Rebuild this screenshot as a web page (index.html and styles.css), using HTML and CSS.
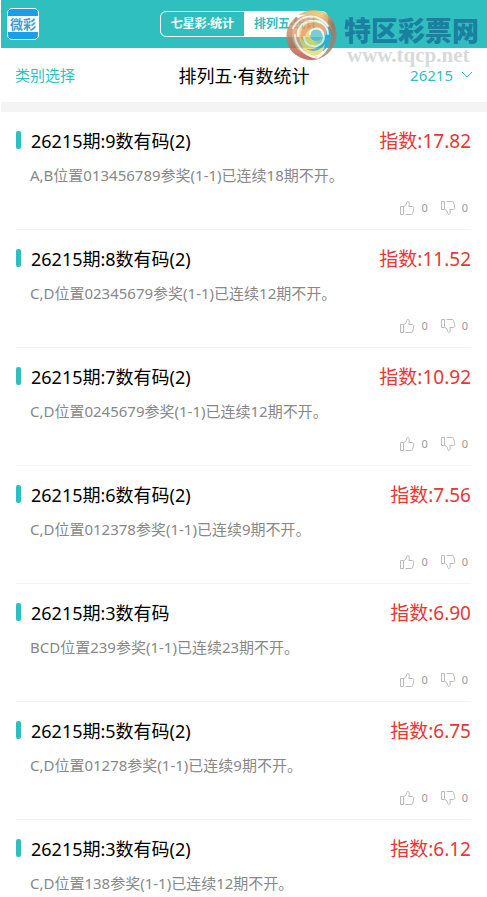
FILE: index.html
```html
<!DOCTYPE html>
<html lang="zh-CN">
<head>
    <meta charset="UTF-8">
    <meta name="viewport" content="width=device-width, initial-scale=1">
    <title>排列五·有数统计</title>
    <link rel="stylesheet" href="styles.css">
</head>
<body>
<svg class="sprite" aria-hidden="true">
    <symbol id="thumb" viewBox="0 0 16 16">
        <path d="M1.500 6.500h3v8h-3zM6.500 14.500h5.600c1 0 1.400-.5 1.600-1.300l1.100-4.800c.2-1.200-.4-1.900-1.500-1.900H9.800c.5-1.700.6-3.400.1-4.400-.4-.9-1.900-.9-2.100.2-.3 2-1.300 3.700-3.300 4.700"/>
    </symbol>
</svg>
<header class="header">
    <a href="#" class="logo" aria-label="微彩"><span>微彩</span></a>
    <nav class="tabs">
        <a href="#">七星彩·统计</a>
        <a href="#" class="active">排列五·统计</a>
    </nav>
    <div class="watermark">
        <svg viewBox="0 0 52 52" aria-hidden="true">
            <defs>
                <linearGradient id="rim" x1="0" y1="0" x2="1" y2="1">
                    <stop offset="0" stop-color="#dda070"/>
                    <stop offset=".35" stop-color="#e6c467"/>
                    <stop offset=".6" stop-color="#b8674f"/>
                    <stop offset="1" stop-color="#8f9a80"/>
                </linearGradient>
                <linearGradient id="left" x1="0" y1="0" x2="1" y2="1">
                    <stop offset="0" stop-color="#c8a070"/>
                    <stop offset=".5" stop-color="#c0604f"/>
                    <stop offset="1" stop-color="#b8403c"/>
                </linearGradient>
                <linearGradient id="core" x1="0" y1="0" x2="1" y2="0">
                    <stop offset="0" stop-color="#ecc95f"/>
                    <stop offset=".45" stop-color="#e8dc62"/>
                    <stop offset=".75" stop-color="#6fc3b4"/>
                    <stop offset="1" stop-color="#35a9d6"/>
                </linearGradient>
            </defs>
            <path fill="url(#rim)" d="M12 6C23-2 40-1 47 12c9 17 0 35-18 39 11-5 17-15 15-26C41 11 26 4 12 6z"/>
            <path fill="url(#left)" d="M9 9C-3 19-2 38 10 46c7 5 15 6 22 4-14-2-23-12-24-23-1-7 1-13 5-18z"/>
            <path fill="#e0a070" d="M14 8C3 18 4 34 14 42c6 5 12 7 18 6-13-4-20-13-19-23 1-9 8-15 17-14 8 0 14 5 17 12C43 8 26 2 14 8z"/>
            <circle cx="29" cy="27" r="16" fill="url(#core)"/>
            <path fill="#2da8d6" d="M43 24c4 10-3 20-14 20-5 0-9-2-12-5 9 3 16 0 19-6 2-4 3-9 1-13 3 0 5 2 6 4z"/>
            <path fill="#e8935a" d="M15 24c1-9 11-13 19-9 5 2 7 7 6 12-4-8-11-10-17-6-4 3-5 8-3 13-4-2-6-6-5-10z"/>
            <path fill="#ecd862" d="M16 36c7 9 18 7 23-1-1 9-9 14-16 11-3-2-6-5-7-10z"/>
            <circle cx="30" cy="26" r="6" fill="#5dbdd0"/>
            <path class="gleam" d="M7 19C14 5 32 3 42 17M12 27c-1-9 6-16 16-15 8 0 14 6 14 13M9 26c0 10 9 20 20 22M24 25c0-6 10-8 13-1 3 8-3 14-10 13-5 0-9-4-9-9"/>
        </svg>
        <div class="site">
            <strong>特区彩票网</strong>
            <span>www.tqcp.net</span>
        </div>
    </div>
</header>
<div class="filter">
    <button type="button">类别选择</button>
    <h1>排列五·有数统计</h1>
    <button type="button" class="issue">26215
        <svg viewBox="0 0 12 8" aria-hidden="true"><path d="M1 1l5 5 5-5"/></svg>
    </button>
</div>
<main class="list">
    <article class="item">
        <div class="item-head"><h2>26215期:9数有码(2)</h2><span class="index">指数:17.82</span></div>
        <p>A,B位置013456789参奖(1-1)已连续18期不开。</p>
        <div class="votes">
            <button type="button" aria-label="赞"><svg><use href="#thumb"/></svg>0</button>
            <button type="button" aria-label="踩"><svg class="down"><use href="#thumb"/></svg>0</button>
        </div>
    </article>
    <article class="item">
        <div class="item-head"><h2>26215期:8数有码(2)</h2><span class="index">指数:11.52</span></div>
        <p>C,D位置02345679参奖(1-1)已连续12期不开。</p>
        <div class="votes">
            <button type="button" aria-label="赞"><svg><use href="#thumb"/></svg>0</button>
            <button type="button" aria-label="踩"><svg class="down"><use href="#thumb"/></svg>0</button>
        </div>
    </article>
    <article class="item">
        <div class="item-head"><h2>26215期:7数有码(2)</h2><span class="index">指数:10.92</span></div>
        <p>C,D位置0245679参奖(1-1)已连续12期不开。</p>
        <div class="votes">
            <button type="button" aria-label="赞"><svg><use href="#thumb"/></svg>0</button>
            <button type="button" aria-label="踩"><svg class="down"><use href="#thumb"/></svg>0</button>
        </div>
    </article>
    <article class="item">
        <div class="item-head"><h2>26215期:6数有码(2)</h2><span class="index">指数:7.56</span></div>
        <p>C,D位置012378参奖(1-1)已连续9期不开。</p>
        <div class="votes">
            <button type="button" aria-label="赞"><svg><use href="#thumb"/></svg>0</button>
            <button type="button" aria-label="踩"><svg class="down"><use href="#thumb"/></svg>0</button>
        </div>
    </article>
    <article class="item">
        <div class="item-head"><h2>26215期:3数有码</h2><span class="index">指数:6.90</span></div>
        <p>BCD位置239参奖(1-1)已连续23期不开。</p>
        <div class="votes">
            <button type="button" aria-label="赞"><svg><use href="#thumb"/></svg>0</button>
            <button type="button" aria-label="踩"><svg class="down"><use href="#thumb"/></svg>0</button>
        </div>
    </article>
    <article class="item">
        <div class="item-head"><h2>26215期:5数有码(2)</h2><span class="index">指数:6.75</span></div>
        <p>C,D位置01278参奖(1-1)已连续9期不开。</p>
        <div class="votes">
            <button type="button" aria-label="赞"><svg><use href="#thumb"/></svg>0</button>
            <button type="button" aria-label="踩"><svg class="down"><use href="#thumb"/></svg>0</button>
        </div>
    </article>
    <article class="item">
        <div class="item-head"><h2>26215期:3数有码(2)</h2><span class="index">指数:6.12</span></div>
        <p>C,D位置138参奖(1-1)已连续12期不开。</p>
    </article>
</main>
</body>
</html>
```
FILE: styles.css
```css
* {
    margin: 0;
    padding: 0;
    box-sizing: border-box;
}

body {
    padding-left: 1px;
    background: #fff;
    color: #000;
    font-family: "Noto Sans", "Noto Sans CJK SC", sans-serif;
}

a {
    text-decoration: none;
}

button {
    border: 0;
    background: none;
    font-family: inherit;
    cursor: pointer;
}

.sprite {
    display: none;
}

/* 顶部 */
.header {
    position: relative;
    display: grid;
    grid-template-columns: 1fr auto 1fr;
    align-items: center;
    height: 48px;
    padding: 0 6px;
    background: #30bfbf;
}

.logo {
    width: 32px;
    height: 32px;
    padding: 7px 0;
    border: 1px solid #fff;
    border-radius: 5px;
    background: #199ee8;
}

.logo span {
    display: block;
    background: #fff;
    color: #3a9fd8;
    font-size: 13px;
    font-weight: bold;
    line-height: 16px;
    text-align: center;
}

.tabs {
    display: flex;
    border: 1px solid #fff;
    border-radius: 6px;
    overflow: hidden;
}

.tabs a {
    padding: 0 10px;
    color: #fff;
    font-size: 12px;
    font-weight: bold;
    line-height: 24px;
}

.tabs .active {
    background: #fff;
    color: #30bfbf;
}

.watermark {
    position: absolute;
    top: 9px;
    right: 8px;
    display: flex;
    gap: 6px;
    pointer-events: none;
}

.watermark svg {
    width: 52px;
    height: 52px;
    opacity: .8;
}

.gleam {
    fill: none;
    stroke: #fff;
    stroke-width: 2;
    stroke-linecap: round;
    opacity: .85;
}

.site {
    padding-top: 5px;
}

.site strong {
    display: block;
    color: #1b80a0;
    font-size: 27px;
    font-weight: 900;
    line-height: 34px;
}

.site span {
    display: block;
    margin-left: 3px;
    color: #d8dada;
    font-family: "Liberation Serif", serif;
    font-size: 21px;
    font-weight: bold;
    line-height: 14px;
}

/* 筛选栏 */
.filter {
    display: grid;
    grid-template-columns: 1fr auto 1fr;
    align-items: center;
    height: 64px;
    padding: 0 14px 1px;
    border-bottom: 10px solid #f4f4f4;
}

.filter h1 {
    font-size: 18px;
    font-weight: normal;
}

.filter button {
    justify-self: start;
    color: #30bfbf;
    font-size: 15px;
}

.filter .issue {
    justify-self: end;
    display: flex;
    align-items: center;
    gap: 8px;
}

.issue svg {
    width: 12px;
    height: 8px;
    fill: none;
    stroke: #30bfbf;
}

/* 列表 */
.list {
    padding: 0 16px 0 15px;
}

.item {
    height: 118px;
    padding-top: 15px;
    border-bottom: 1px solid #f4f4f4;
}

.item-head {
    display: flex;
    align-items: center;
    height: 26px;
}

.item-head::before {
    content: "";
    width: 5px;
    height: 18px;
    margin-right: 10px;
    border-radius: 2px;
    background: #30bfbf;
}

.item h2 {
    flex: 1;
    font-size: 18px;
    font-weight: normal;
}

.index {
    color: #e53935;
    font-size: 19px;
}

.item p {
    padding-left: 14px;
    margin-top: 10px;
    color: #888;
    font-size: 15px;
    line-height: 24px;
}

.votes {
    display: flex;
    justify-content: flex-end;
    gap: 12px;
    margin-top: 13px;
    padding-right: 3px;
}

.votes button {
    display: flex;
    align-items: center;
    gap: 6px;
    color: #999;
    font-size: 11px;
    line-height: 16px;
}

.votes svg {
    width: 16px;
    height: 16px;
    fill: none;
    stroke: #bbb;
}

.votes .down {
    transform: scaleY(-1);
}
```
